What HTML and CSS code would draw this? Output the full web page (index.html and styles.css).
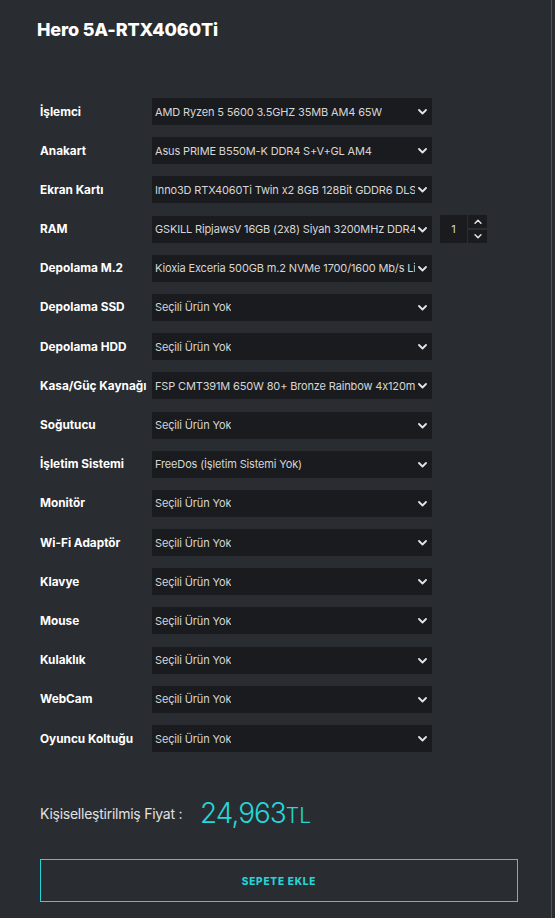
FILE: index.html
```html
<!DOCTYPE html>
<html lang="tr">
<head>
<meta charset="utf-8">
<title>Hero 5A-RTX4060Ti</title>
<link rel="stylesheet" href="styles.css">
</head>
<body>
<div class="sheet">
  <h1 class="title">Hero 5A-RTX4060Ti</h1>

  <div class="config">
    <div class="row"><span class="label">İşlemci</span><div class="pick"><span class="val">AMD Ryzen 5 5600 3.5GHZ 35MB AM4 65W</span><svg class="chev" viewBox="0 0 9 6"><path d="M1 1 L4.5 4.5 L8 1"/></svg></div></div>
    <div class="row"><span class="label">Anakart</span><div class="pick"><span class="val">Asus PRIME B550M-K DDR4 S+V+GL AM4</span><svg class="chev" viewBox="0 0 9 6"><path d="M1 1 L4.5 4.5 L8 1"/></svg></div></div>
    <div class="row"><span class="label">Ekran Kartı</span><div class="pick"><span class="val">Inno3D RTX4060Ti Twin x2 8GB 128Bit GDDR6 DLSS 3</span><svg class="chev" viewBox="0 0 9 6"><path d="M1 1 L4.5 4.5 L8 1"/></svg></div></div>
    <div class="row"><span class="label">RAM</span><div class="pick"><span class="val">GSKILL RipjawsV 16GB (2x8) Siyah 3200MHz DDR4</span><svg class="chev" viewBox="0 0 9 6"><path d="M1 1 L4.5 4.5 L8 1"/></svg></div>
      <div class="qty"><span class="num">1</span>
        <div class="spin">
          <span class="step"><svg viewBox="0 0 9 6"><path d="M1 5 L4.5 1.5 L8 5"/></svg></span>
          <span class="step"><svg viewBox="0 0 9 6"><path d="M1 1 L4.5 4.5 L8 1"/></svg></span>
        </div>
      </div>
    </div>
    <div class="row"><span class="label">Depolama M.2</span><div class="pick"><span class="val">Kioxia Exceria 500GB m.2 NVMe 1700/1600 Mb/s Limited</span><svg class="chev" viewBox="0 0 9 6"><path d="M1 1 L4.5 4.5 L8 1"/></svg></div></div>
    <div class="row"><span class="label">Depolama SSD</span><div class="pick"><span class="val">Seçili Ürün Yok</span><svg class="chev" viewBox="0 0 9 6"><path d="M1 1 L4.5 4.5 L8 1"/></svg></div></div>
    <div class="row"><span class="label">Depolama HDD</span><div class="pick"><span class="val">Seçili Ürün Yok</span><svg class="chev" viewBox="0 0 9 6"><path d="M1 1 L4.5 4.5 L8 1"/></svg></div></div>
    <div class="row"><span class="label">Kasa/Güç Kaynağı</span><div class="pick"><span class="val">FSP CMT391M 650W 80+ Bronze Rainbow 4x120mm</span><svg class="chev" viewBox="0 0 9 6"><path d="M1 1 L4.5 4.5 L8 1"/></svg></div></div>
    <div class="row"><span class="label">Soğutucu</span><div class="pick"><span class="val">Seçili Ürün Yok</span><svg class="chev" viewBox="0 0 9 6"><path d="M1 1 L4.5 4.5 L8 1"/></svg></div></div>
    <div class="row"><span class="label">İşletim Sistemi</span><div class="pick"><span class="val">FreeDos (İşletim Sistemi Yok)</span><svg class="chev" viewBox="0 0 9 6"><path d="M1 1 L4.5 4.5 L8 1"/></svg></div></div>
    <div class="row"><span class="label">Monitör</span><div class="pick"><span class="val">Seçili Ürün Yok</span><svg class="chev" viewBox="0 0 9 6"><path d="M1 1 L4.5 4.5 L8 1"/></svg></div></div>
    <div class="row"><span class="label">Wi-Fi Adaptör</span><div class="pick"><span class="val">Seçili Ürün Yok</span><svg class="chev" viewBox="0 0 9 6"><path d="M1 1 L4.5 4.5 L8 1"/></svg></div></div>
    <div class="row"><span class="label">Klavye</span><div class="pick"><span class="val">Seçili Ürün Yok</span><svg class="chev" viewBox="0 0 9 6"><path d="M1 1 L4.5 4.5 L8 1"/></svg></div></div>
    <div class="row"><span class="label">Mouse</span><div class="pick"><span class="val">Seçili Ürün Yok</span><svg class="chev" viewBox="0 0 9 6"><path d="M1 1 L4.5 4.5 L8 1"/></svg></div></div>
    <div class="row"><span class="label">Kulaklık</span><div class="pick"><span class="val">Seçili Ürün Yok</span><svg class="chev" viewBox="0 0 9 6"><path d="M1 1 L4.5 4.5 L8 1"/></svg></div></div>
    <div class="row"><span class="label">WebCam</span><div class="pick"><span class="val">Seçili Ürün Yok</span><svg class="chev" viewBox="0 0 9 6"><path d="M1 1 L4.5 4.5 L8 1"/></svg></div></div>
    <div class="row"><span class="label">Oyuncu Koltuğu</span><div class="pick"><span class="val">Seçili Ürün Yok</span><svg class="chev" viewBox="0 0 9 6"><path d="M1 1 L4.5 4.5 L8 1"/></svg></div></div>
  </div>

  <div class="price">
    <span class="price-label">Kişiselleştirilmiş Fiyat :</span>
    <span class="amount">24,963<span class="cur">TL</span></span>
  </div>

  <button class="cart" type="button">SEPETE EKLE</button>
</div>
</body>
</html>
```

FILE: styles.css
```css
* { box-sizing: border-box; }

html, body {
  margin: 0;
  padding: 0;
  background: #292c31;
}

body {
  font-family: Inter, "Noto Sans", sans-serif;
  color: #fff;
}

.sheet {
  width: 552px;
  min-height: 918px;
  border-right: 1px solid #8a3b3b;
  padding: 20px 0 0 40px;
}

.title {
  margin: 0 0 0 -3px;
  font-size: 18px;
  line-height: 20px;
  font-weight: 800;
  letter-spacing: -0.15px;
}

.config {
  margin-top: 58px;
  display: flex;
  flex-direction: column;
  row-gap: 12.2px;
}

.row {
  display: flex;
  align-items: center;
  height: 27px;
}

.label {
  width: 112px;
  flex: none;
  font-size: 11.8px;
  font-weight: 700;
  white-space: nowrap;
  color: #fff;
}

/* dropdown box: value is clipped before the chevron */
.pick {
  position: relative;
  width: 280px;
  height: 27px;
  flex: none;
  background: #1a1b1e;
  display: flex;
  align-items: center;
  padding: 0 17px 0 3px;
}

.val {
  font-size: 11px;
  color: #d6d6d6;
  white-space: nowrap;
  overflow: hidden;
  letter-spacing: -0.15px;
}

.chev {
  position: absolute;
  right: 5px;
  top: 11px;
  width: 9px;
  height: 6px;
}

.chev path, .step path {
  fill: none;
  stroke: #e4e4e4;
  stroke-width: 1.8;
  stroke-linecap: round;
  stroke-linejoin: round;
}

.qty {
  display: flex;
  margin-left: 8px;
  gap: 1px;
}

.num {
  width: 27px;
  height: 28px;
  background: #1a1b1e;
  display: flex;
  align-items: center;
  justify-content: center;
  font-size: 11px;
  color: #d6d6d6;
}

.spin {
  display: flex;
  flex-direction: column;
  justify-content: space-between;
  height: 28px;
}

.step {
  width: 19px;
  height: 13px;
  background: #1a1b1e;
  display: flex;
  align-items: center;
  justify-content: center;
}

.step svg {
  width: 8px;
  height: 5px;
}

.price {
  margin-top: 46px;
  display: flex;
  align-items: center;
  height: 30px;
}

.price-label {
  width: 160px;
  font-size: 14px;
  color: #e2e2e2;
  letter-spacing: -0.25px;
}

.amount {
  font-size: 28px;
  font-weight: 300;
  color: #22d8d8;
  letter-spacing: -1px;
}

.cur {
  font-size: 21px;
  letter-spacing: 0;
}

.cart {
  display: block;
  margin-top: 31px;
  width: 478px;
  height: 43px;
  background: transparent;
  border: 1px solid #27d3d6;
  color: #27d3d6;
  font-family: Inter, "Noto Sans", sans-serif;
  font-size: 10px;
  font-weight: 800;
  letter-spacing: 0.8px;
  cursor: pointer;
}
```
